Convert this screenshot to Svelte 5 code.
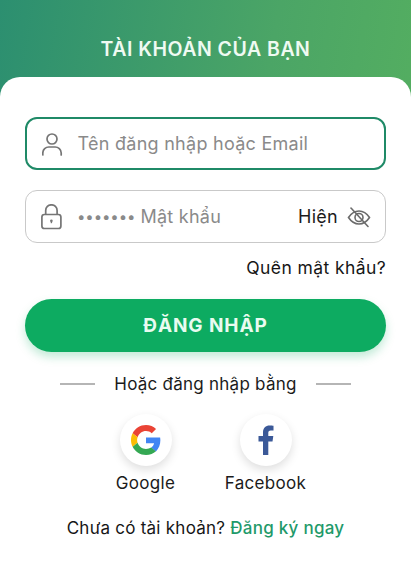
<script>
  let showPassword = $state(false);
</script>

<div class="page">
  <header class="top">
    <h1>TÀI KHOẢN CỦA BẠN</h1>
  </header>

  <main class="card">
    <label class="field active">
      <svg class="icon" viewBox="0 0 22 24" width="22" height="24" fill="none" stroke="#757575" stroke-width="1.7">
        <circle cx="10" cy="7" r="5" />
        <path d="M0.800 23v-2c0-3.500 3-6 6-6h6.400c3 0 6 2.500 6 6v2" stroke-linecap="round" />
      </svg>
      <span class="placeholder">Tên đăng nhập hoặc Email</span>
    </label>

    <label class="field">
      <svg class="icon" viewBox="0 0 22 26" width="22" height="26" fill="none" stroke="#757575" stroke-width="1.700">
        <rect x="0.900" y="10.500" width="19" height="14" rx="2.500" />
        <path d="M4.700 10.500V6.500a5.700 5.700 0 0 1 11.400 0v4" />
        <circle cx="10.400" cy="16.800" r="1.300" fill="#757575" stroke="none" />
        <path d="M10.400 17v2.200" stroke-width="1.400" />
      </svg>
      <span class="dots">•••••••</span>
      <span class="placeholder">Mật khẩu</span>
      <button class="show" type="button" onclick={() => (showPassword = !showPassword)}>
        <span>Hiện</span>
        <svg viewBox="0 0 24 24" width="24" height="24" fill="none" stroke="#6b6b6b" stroke-width="1.600">
          <path d="M1.500 12.500C4.500 8 8 6 12 6s7.500 2 10.500 6.500C19.500 17 16 19 12 19s-7.500-2-10.500-6.500Z" />
          <circle cx="12" cy="12.500" r="4" />
          <path d="M4 3l17 18.500" stroke-linecap="round" />
        </svg>
      </button>
    </label>

    <a class="forgot" href="#forgot">Quên mật khẩu?</a>

    <button class="submit" type="button">ĐĂNG NHẬP</button>

    <div class="divider">
      <span class="rule"></span>
      <span>Hoặc đăng nhập bằng</span>
      <span class="rule"></span>
    </div>

    <div class="socials">
      <div class="social">
        <span class="disc">
          <svg viewBox="0 0 48 48" width="30" height="30">
            <path fill="#EA4335" d="M24 9.500c3.540 0 6.710 1.220 9.210 3.600l6.850-6.850C35.900 2.380 30.470 0 24 0 14.620 0 6.510 5.380 2.560 13.220l7.980 6.190C12.430 13.720 17.740 9.500 24 9.500z" />
            <path fill="#4285F4" d="M46.980 24.550c0-1.570-.15-3.090-.38-4.550H24v9.020h12.940c-.58 2.960-2.260 5.480-4.780 7.180l7.730 6c4.510-4.180 7.090-10.360 7.090-17.650z" />
            <path fill="#FBBC05" d="M10.530 28.590c-.48-1.450-.76-2.990-.76-4.590s.27-3.140.76-4.590l-7.980-6.190C.92 16.460 0 20.120 0 24c0 3.880.92 7.540 2.560 10.780l7.970-6.190z" />
            <path fill="#34A853" d="M24 48c6.480 0 11.930-2.130 15.890-5.810l-7.730-6c-2.150 1.450-4.920 2.300-8.160 2.300-6.260 0-11.570-4.220-13.470-9.910l-7.980 6.190C6.510 42.620 14.620 48 24 48z" />
          </svg>
        </span>
        <span class="social-name">Google</span>
      </div>
      <div class="social">
        <span class="disc">
          <svg viewBox="0 0 16 30" width="16" height="30">
            <path fill="#3b5998" d="M5 30V16.500H0.500V11H5V7.500C5 2.800 7.800 0.500 11.500 0.500c1.700 0 3.300.2 4 .3v4.700h-2.600C10.700 5.500 10.300 6.500 10.300 8v3h5l-.8 5.500h-4.200V30z" />
          </svg>
        </span>
        <span class="social-name">Facebook</span>
      </div>
    </div>

    <p class="signup">Chưa có tài khoản? <a href="#signup">Đăng ký ngay</a></p>
  </main>
</div>

<style>
  :global(body) {
    margin: 0;
    font-family: Inter, "Open Sans", "Liberation Sans", sans-serif;
  }
  .page {
    width: 411px;
    height: 562px;
    overflow: hidden;
    display: flex;
    flex-direction: column;
    background: linear-gradient(100deg, #2c8f70 0%, #4ba566 55%, #58b25e 100%);
  }
  .top {
    height: 77px;
    flex-shrink: 0;
    display: flex;
    align-items: flex-start;
    justify-content: center;
  }
  h1 {
    margin: 37px 0 0;
    font-size: 19.500px;
    line-height: 24px;
    letter-spacing: 0.500px;
    font-weight: 600;
    color: #effaf2;
  }
  .card {
    flex: 1;
    background: #fff;
    border-radius: 20px 20px 0 0;
    padding: 40px 25px 0 25px;
    display: flex;
    flex-direction: column;
  }
  .field {
    height: 53px;
    box-sizing: border-box;
    border: 1.500px solid #c9c9c9;
    border-radius: 12px;
    display: flex;
    align-items: center;
    padding: 0 14px 0 15px;
    margin-bottom: 20px;
    font-size: 18px;
    letter-spacing: 0.270px;
  }
  .field.active {
    border: 2px solid #1f8a67;
    padding-left: 14.500px;
  }
  .icon {
    flex-shrink: 0;
    margin-right: 14px;
  }
  .placeholder {
    color: #8a8a8a;
  }
  .dots {
    color: #8a8a8a;
    font-size: 15px;
    letter-spacing: -0.100px;
    margin-right: 5px;
  }
  .show {
    margin-left: auto;
    display: flex;
    align-items: center;
    gap: 9px;
    border: none;
    background: none;
    padding: 0;
    font: inherit;
    letter-spacing: inherit;
    color: #1c1c1c;
  }
  .forgot {
    align-self: flex-end;
    margin-top: -6px;
    color: #161616;
    font-size: 17.500px;
    letter-spacing: 0.400px;
    line-height: 22px;
    text-decoration: none;
  }
  .submit {
    margin-top: 20px;
    height: 53px;
    border: none;
    border-radius: 27px;
    background: #0dab61;
    box-shadow: 0 5px 10px rgba(13, 171, 97, 0.25);
    color: #e9fbf0;
    font: inherit;
    font-size: 19px;
    letter-spacing: 0.900px;
    font-weight: 700;
  }
  .divider {
    margin-top: 21px;
    display: flex;
    align-items: center;
    justify-content: center;
    gap: 19px;
    font-size: 17px;
    letter-spacing: 0.250px;
    line-height: 22px;
    color: #1b1b1b;
  }
  .rule {
    width: 35px;
    height: 1.500px;
    background: #b5b5b5;
  }
  .socials {
    margin-top: 19px;
    display: flex;
    justify-content: center;
    gap: 50px;
  }
  .social {
    width: 70px;
    display: flex;
    flex-direction: column;
    align-items: center;
    gap: 6px;
  }
  .disc {
    width: 52px;
    height: 52px;
    border-radius: 50%;
    background: #fff;
    box-shadow: 0 4px 10px rgba(0, 0, 0, 0.13);
    display: flex;
    align-items: center;
    justify-content: center;
  }
  .social-name {
    font-size: 17px;
    letter-spacing: 0.300px;
    line-height: 22px;
    color: #1b1b1b;
    white-space: nowrap;
  }
  .signup {
    margin: 23px 0 0;
    text-align: center;
    font-size: 17px;
    letter-spacing: 0.250px;
    line-height: 22px;
    color: #161616;
  }
  .signup a {
    color: #1f9a6a;
    font-weight: 500;
    text-decoration: none;
  }
</style>
